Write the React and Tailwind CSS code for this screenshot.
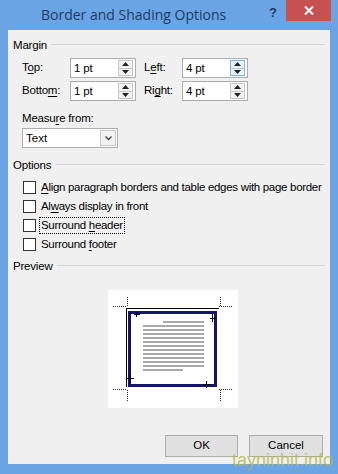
import React from "react";

const F = { fontFamily: '"Liberation Sans", Arial, sans-serif' };

function U({ children }) {
  return <span className="underline underline-offset-2">{children}</span>;
}

function GroupHeader({ label }) {
  return (
    <div className="flex items-center h-[16px]">
      <span className="text-[11.5px] tracking-[-0.2px] leading-[16px] text-black whitespace-nowrap">{label}</span>
      <div className="flex-1 ml-[4px] h-[2px] border-t border-[#d5d5d5] border-b-white" />
    </div>
  );
}

function Spin({ value, hot }) {
  return (
    <div className="w-[66px] h-[20px] bg-white border border-[#abadb3] flex items-center">
      <span className="flex-1 pl-[3px] text-[11.5px] leading-[16px] whitespace-nowrap">{value}</span>
      <div
        className={
          "w-[15px] h-[16px] mr-[2px] flex flex-col border " +
          (hot ? "border-[#7eb4ea] bg-[#e5f1fb]" : "border-[#c8c8c8] bg-[#f2f2f2]")
        }
      >
        <div className="flex-1 flex items-center justify-center border-b border-[#c8c8c8]">
          <svg width="7" height="4" viewBox="0 0 7 4"><path d="M0 4 L3.5 0 L7 4Z" fill="#222" /></svg>
        </div>
        <div className="flex-1 flex items-center justify-center">
          <svg width="7" height="4" viewBox="0 0 7 4"><path d="M0 0 L3.5 4 L7 0Z" fill="#222" /></svg>
        </div>
      </div>
    </div>
  );
}

function Check({ children, focus }) {
  return (
    <div className="flex items-center h-[19px] pl-[10px]">
      <div className="w-[13px] h-[13px] shrink-0 border border-[#333] bg-white" />
      <span
        className={
          "ml-[4px] text-[11.5px] tracking-[-0.3px] leading-[15px] px-[1px] whitespace-nowrap " +
          (focus ? "outline outline-1 outline-dotted outline-black" : "")
        }
      >
        {children}
      </span>
    </div>
  );
}

function Preview() {
  const lines = [];
  for (let i = 0; i < 13; i++) {
    const y = 32 + i * 4;
    const x1 = i === 0 ? 55 : 35;
    const x2 = i === 12 ? 75 : 96;
    lines.push(<line key={i} x1={x1} y1={y} x2={x2} y2={y} stroke="#a8a8a8" strokeWidth="2" />);
  }
  const dot = { stroke: "#333", strokeWidth: 1, strokeDasharray: "1 1" };
  return (
    <svg width="130" height="118" viewBox="0 0 130 118">
      <rect x="0" y="0" width="130" height="118" fill="#fff" />
      <line x1="5" y1="16.5" x2="18" y2="16.5" {...dot} />
      <line x1="19.5" y1="7" x2="19.5" y2="17" {...dot} />
      <line x1="111" y1="16.5" x2="124" y2="16.5" {...dot} />
      <line x1="112.5" y1="7" x2="112.5" y2="17" {...dot} />
      <line x1="5" y1="99.5" x2="18" y2="99.5" {...dot} />
      <line x1="19.5" y1="100" x2="19.5" y2="111" {...dot} />
      <line x1="111" y1="99.5" x2="124" y2="99.5" {...dot} />
      <line x1="112.5" y1="100" x2="112.5" y2="111" {...dot} />
      <line x1="18.5" y1="18" x2="18.5" y2="97" stroke="#000" strokeWidth="1" />
      <line x1="18" y1="18.5" x2="111" y2="18.5" stroke="#000" strokeWidth="1" />
      <rect x="21.5" y="22.5" width="86" height="73" fill="#fff" stroke="#15156e" strokeWidth="3" />
      <line x1="26" y1="24.5" x2="32" y2="24.5" stroke="#000" strokeWidth="1" />
      <line x1="28.5" y1="22" x2="28.5" y2="27" stroke="#000" strokeWidth="1" />
      <line x1="102" y1="28.5" x2="108" y2="28.5" stroke="#000" strokeWidth="1" />
      <line x1="104.5" y1="24" x2="104.5" y2="32" stroke="#000" strokeWidth="1" />
      <line x1="19" y1="88.5" x2="26" y2="88.5" stroke="#000" strokeWidth="1" />
      <line x1="22.5" y1="85" x2="22.5" y2="92" stroke="#000" strokeWidth="1" />
      <line x1="95" y1="94.5" x2="102" y2="94.5" stroke="#000" strokeWidth="1" />
      <line x1="98.5" y1="91" x2="98.5" y2="98" stroke="#000" strokeWidth="1" />
      {lines}
    </svg>
  );
}

export default function App() {
  return (
    <div className="relative w-[338px] h-[474px] bg-[#6aa4e4] overflow-hidden" style={F}>
      <div className="relative h-[30px]">
        <div
          className="absolute left-[41px] top-[5px] text-[14px] leading-[20px] text-[#1d3c63] whitespace-nowrap"
          style={{ fontFamily: '"Open Sans", "Noto Sans", sans-serif' }}
        >
          Border and Shading Options
        </div>
        <div className="absolute left-[269px] top-[3px] text-[13px] font-bold text-[#1d3c63]">?</div>
        <div className="absolute left-[286px] top-0 w-[45px] h-[21px] bg-[#c75050] flex items-center justify-center">
          <svg width="10" height="9" viewBox="0 0 10 9">
            <path d="M1 0.5 L9 8.5 M9 0.5 L1 8.5" stroke="#fff" strokeWidth="2" />
          </svg>
        </div>
      </div>
      <div className="ml-[8px] w-[322px] h-[434px] bg-[#f0f0f0] pt-[7px] pl-[5px] pr-[5px] text-black">
        <GroupHeader label="Margin" />
        <div className="mt-[5px] flex items-center h-[20px] pl-[9px] text-[11.5px] tracking-[-0.2px] whitespace-nowrap">
          <span className="w-[48px]">T<U>o</U>p:</span>
          <Spin value="1 pt" />
          <span className="ml-[8px] w-[38px]">L<U>e</U>ft:</span>
          <Spin value="4 pt" hot />
        </div>
        <div className="mt-[3px] flex items-center h-[20px] pl-[9px] text-[11.5px] tracking-[-0.2px] whitespace-nowrap">
          <span className="w-[48px]">Botto<U>m</U>:</span>
          <Spin value="1 pt" />
          <span className="ml-[8px] w-[38px]">Ri<U>g</U>ht:</span>
          <Spin value="4 pt" />
        </div>
        <div className="mt-[9px] pl-[9px] h-[16px] text-[11.5px] tracking-[-0.2px] leading-[16px] whitespace-nowrap">
          Measu<U>r</U>e from:
        </div>
        <div className="mt-[2px] ml-[9px] w-[96px] h-[20px] bg-white border border-[#abadb3] flex items-center">
          <span className="flex-1 pl-[3px] text-[11.5px] leading-[16px]">Text</span>
          <div className="w-[16px] h-[16px] mr-[1px] border border-[#c8c8c8] bg-[#f2f2f2] flex items-center justify-center">
            <svg width="7" height="5" viewBox="0 0 7 5">
              <path d="M0.5 0.5 L3.5 3.5 L6.5 0.5" stroke="#444" strokeWidth="1.3" fill="none" />
            </svg>
          </div>
        </div>
        <div className="mt-[9px]">
          <GroupHeader label="Options" />
        </div>
        <div className="mt-[5px]">
          <Check><U>A</U>lign paragraph borders and table edges with page border</Check>
          <Check>Al<U>w</U>ays display in front</Check>
          <Check focus>Surround <U>h</U>eader</Check>
          <Check>Surround <U>f</U>ooter</Check>
        </div>
        <div className="mt-[4px]">
          <GroupHeader label="Preview" />
        </div>
        <div className="mt-[16px] ml-[95px] w-[130px] h-[118px]">
          <Preview />
        </div>
        <div className="mt-[27px] flex justify-end pr-[2px] gap-[11px]">
          <button className="w-[73px] h-[22px] bg-[#e1e1e1] border border-[#adadad] text-[11.5px]">OK</button>
          <button className="w-[74px] h-[22px] bg-[#e1e1e1] border border-[#adadad] text-[11.5px]">Cancel</button>
        </div>
      </div>
      <div
        className="absolute left-[232px] top-[449px] text-[18px] leading-[22px] text-[#b5b84e] opacity-80 whitespace-nowrap"
        style={{ fontFamily: '"Liberation Sans", sans-serif' }}
      >
        tayninhit.info
      </div>
    </div>
  );
}
